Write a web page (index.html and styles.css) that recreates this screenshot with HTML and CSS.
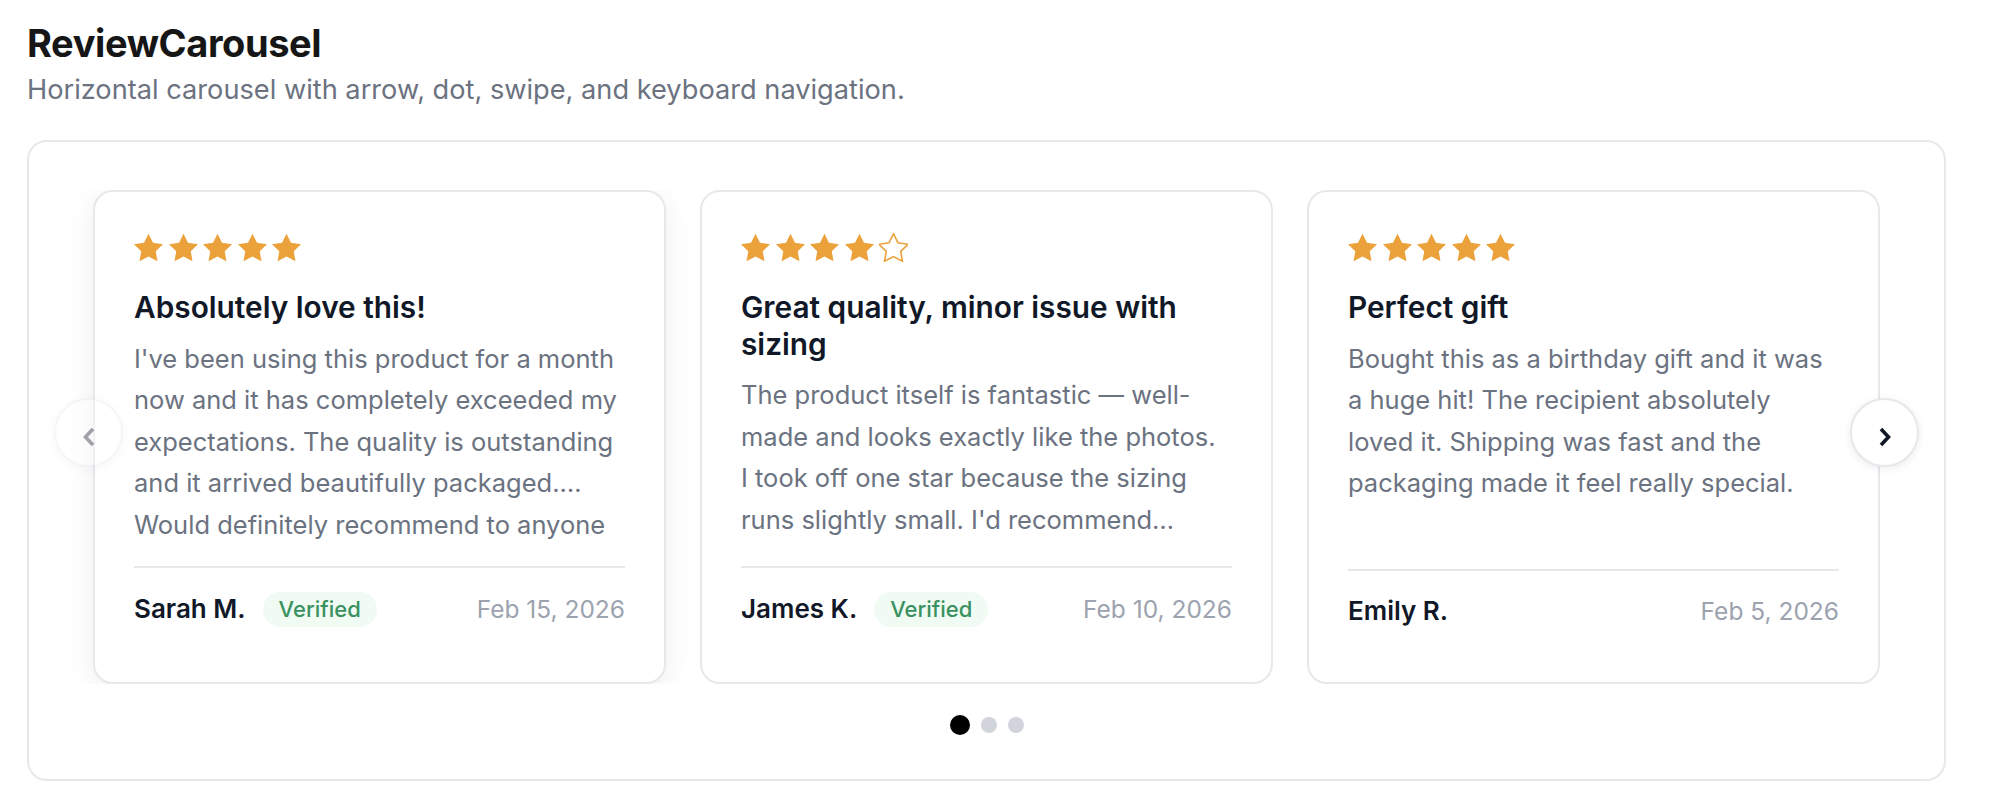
FILE: index.html
```html
<!DOCTYPE html>
<html lang="en">
<head>
<meta charset="utf-8">
<title>ReviewCarousel</title>
<link rel="stylesheet" href="styles.css">
</head>
<body>
<div class="page">
  <h1 class="title">ReviewCarousel</h1>
  <p class="subtitle">Horizontal carousel with arrow, dot, swipe, and keyboard navigation.</p>

  <section class="carousel">
    <div class="stage">
      <button class="nav nav-prev" disabled aria-label="Previous review">
        <svg viewBox="0 0 12 20" width="12" height="20"><polyline points="10,2 2.5,10 10,18" /></svg>
      </button>

      <div class="viewport">
        <div class="track">
          <article class="card card-active">
            <div class="stars">
              <svg class="star" viewBox="2 1.5 20 20"><polygon points="12 2 15.09 8.26 22 9.27 17 14.14 18.18 21.02 12 17.77 5.82 21.02 7 14.14 2 9.27 8.91 8.26"/></svg>
              <svg class="star" viewBox="2 1.5 20 20"><polygon points="12 2 15.09 8.26 22 9.27 17 14.14 18.18 21.02 12 17.77 5.82 21.02 7 14.14 2 9.27 8.91 8.26"/></svg>
              <svg class="star" viewBox="2 1.5 20 20"><polygon points="12 2 15.09 8.26 22 9.27 17 14.14 18.18 21.02 12 17.77 5.82 21.02 7 14.14 2 9.27 8.91 8.26"/></svg>
              <svg class="star" viewBox="2 1.5 20 20"><polygon points="12 2 15.09 8.26 22 9.27 17 14.14 18.18 21.02 12 17.77 5.82 21.02 7 14.14 2 9.27 8.91 8.26"/></svg>
              <svg class="star" viewBox="2 1.5 20 20"><polygon points="12 2 15.09 8.26 22 9.27 17 14.14 18.18 21.02 12 17.77 5.82 21.02 7 14.14 2 9.27 8.91 8.26"/></svg>
            </div>
            <h2 class="card-title">Absolutely love this!</h2>
            <p class="card-body">I've been using this product for a month<br>now and it has completely exceeded my<br>expectations. The quality is outstanding<br>and it arrived beautifully packaged.…<br>Would definitely recommend to anyone</p>
            <footer class="card-footer">
              <span class="author">Sarah M.</span>
              <span class="badge">Verified</span>
              <time class="date">Feb 15, 2026</time>
            </footer>
          </article>

          <article class="card">
            <div class="stars">
              <svg class="star" viewBox="2 1.5 20 20"><polygon points="12 2 15.09 8.26 22 9.27 17 14.14 18.18 21.02 12 17.77 5.82 21.02 7 14.14 2 9.27 8.91 8.26"/></svg>
              <svg class="star" viewBox="2 1.5 20 20"><polygon points="12 2 15.09 8.26 22 9.27 17 14.14 18.18 21.02 12 17.77 5.82 21.02 7 14.14 2 9.27 8.91 8.26"/></svg>
              <svg class="star" viewBox="2 1.5 20 20"><polygon points="12 2 15.09 8.26 22 9.27 17 14.14 18.18 21.02 12 17.77 5.82 21.02 7 14.14 2 9.27 8.91 8.26"/></svg>
              <svg class="star" viewBox="2 1.5 20 20"><polygon points="12 2 15.09 8.26 22 9.27 17 14.14 18.18 21.02 12 17.77 5.82 21.02 7 14.14 2 9.27 8.91 8.26"/></svg>
              <svg class="star star-empty" viewBox="2 1.5 20 20"><polygon points="12 2 15.09 8.26 22 9.27 17 14.14 18.18 21.02 12 17.77 5.82 21.02 7 14.14 2 9.27 8.91 8.26"/></svg>
            </div>
            <h2 class="card-title">Great quality, minor issue with<br>sizing</h2>
            <p class="card-body">The product itself is fantastic — well-<br>made and looks exactly like the photos.<br>I took off one star because the sizing<br>runs slightly small. I'd recommend…</p>
            <footer class="card-footer">
              <span class="author">James K.</span>
              <span class="badge">Verified</span>
              <time class="date">Feb 10, 2026</time>
            </footer>
          </article>

          <article class="card">
            <div class="stars">
              <svg class="star" viewBox="2 1.5 20 20"><polygon points="12 2 15.09 8.26 22 9.27 17 14.14 18.18 21.02 12 17.77 5.82 21.02 7 14.14 2 9.27 8.91 8.26"/></svg>
              <svg class="star" viewBox="2 1.5 20 20"><polygon points="12 2 15.09 8.26 22 9.27 17 14.14 18.18 21.02 12 17.77 5.82 21.02 7 14.14 2 9.27 8.91 8.26"/></svg>
              <svg class="star" viewBox="2 1.5 20 20"><polygon points="12 2 15.09 8.26 22 9.27 17 14.14 18.18 21.02 12 17.77 5.82 21.02 7 14.14 2 9.27 8.91 8.26"/></svg>
              <svg class="star" viewBox="2 1.5 20 20"><polygon points="12 2 15.09 8.26 22 9.27 17 14.14 18.18 21.02 12 17.77 5.82 21.02 7 14.14 2 9.27 8.91 8.26"/></svg>
              <svg class="star" viewBox="2 1.5 20 20"><polygon points="12 2 15.09 8.26 22 9.27 17 14.14 18.18 21.02 12 17.77 5.82 21.02 7 14.14 2 9.27 8.91 8.26"/></svg>
            </div>
            <h2 class="card-title">Perfect gift</h2>
            <p class="card-body">Bought this as a birthday gift and it was<br>a huge hit! The recipient absolutely<br>loved it. Shipping was fast and the<br>packaging made it feel really special.</p>
            <footer class="card-footer">
              <span class="author">Emily R.</span>
              <time class="date">Feb 5, 2026</time>
            </footer>
          </article>
        </div>
      </div>

      <button class="nav nav-next" aria-label="Next review">
        <svg viewBox="0 0 12 20" width="12" height="20"><polyline points="2,2 9.5,10 2,18" /></svg>
      </button>
    </div>

    <div class="dots" role="tablist">
      <span class="dot dot-active"></span>
      <span class="dot"></span>
      <span class="dot"></span>
    </div>
  </section>
</div>
</body>
</html>
```

FILE: styles.css
```css
* {
  box-sizing: border-box;
}

html,
body {
  margin: 0;
  background: #ffffff;
}

body {
  font-family: "Inter", "Noto Sans", "Liberation Sans", sans-serif;
  color: #111827;
}

.page {
  max-width: 1973px;
  padding: 19px 27px 0 27px;
}

.title {
  margin: 0;
  font-size: 38px;
  line-height: 48px;
  font-weight: 700;
  color: #161616;
  letter-spacing: -0.4px;
}

.subtitle {
  margin: 3px 0 0;
  font-size: 27.2px;
  line-height: 40px;
  color: #6b7280;
}

.carousel {
  margin-top: 30px;
  width: 1919px;
  border: 2px solid #e7e8eb;
  border-radius: 20px;
  padding: 48px 0 44px;
}

.stage {
  position: relative;
}

.viewport {
  overflow: hidden;
  padding: 0 64px;
}

.track {
  display: grid;
  grid-template-columns: repeat(3, 1fr);
  gap: 34px;
}

.card {
  display: flex;
  flex-direction: column;
  background: #ffffff;
  border: 2px solid #e7e8eb;
  border-radius: 20px;
  padding: 39px;
}

.card-active {
  box-shadow: 0 6px 28px rgba(17, 24, 39, 0.07);
}

.stars {
  display: flex;
  gap: 5.5px;
  height: 29px;
  margin-top: 2px;
}

.star {
  width: 29px;
  height: 29px;
  fill: #eba23b;
}

.star-empty {
  fill: none;
  stroke: #eba23b;
  stroke-width: 1.1;
  stroke-linejoin: miter;
}

.card-title {
  margin: 27px 0 0;
  font-size: 29.8px;
  line-height: 36.6px;
  font-weight: 600;
  color: #111827;
}

.card-body {
  margin: 12px 0 20px;
  font-size: 25.5px;
  line-height: 41.6px;
  color: #6b7280;
  white-space: nowrap;
}

.card-footer {
  margin-top: auto;
  display: flex;
  align-items: center;
  border-top: 2px solid #e7e8eb;
  padding: 24px 0 16px;
}

.author {
  font-size: 26px;
  line-height: 32px;
  font-weight: 600;
  color: #111827;
}

.badge {
  margin-left: 17px;
  height: 35px;
  padding: 0 16px;
  border-radius: 999px;
  background: #effbf3;
  color: #3a9160;
  font-size: 22px;
  line-height: 35px;
  font-weight: 500;
}

.date {
  margin-left: auto;
  font-size: 24.5px;
  line-height: 32px;
  color: #9ca3af;
}

.nav {
  position: absolute;
  top: 208px;
  width: 69px;
  height: 69px;
  padding: 0;
  border-radius: 50%;
  border: 2px solid #e7e8eb;
  background: #ffffff;
  display: flex;
  align-items: center;
  justify-content: center;
  box-shadow: 0 2px 8px rgba(17, 24, 39, 0.08);
  cursor: pointer;
}

.nav svg {
  width: 12px;
  height: 20px;
  margin-top: 8px;
  fill: none;
  stroke: #111827;
  stroke-width: 3.6;
  stroke-linecap: butt;
  stroke-linejoin: miter;
}

.nav-prev {
  left: 25px;
  opacity: 0.38;
  cursor: default;
}

.nav-next {
  right: 25px;
}

.dots {
  display: flex;
  justify-content: center;
  align-items: center;
  gap: 11px;
  margin-top: 31px;
  height: 20px;
}

.dot {
  width: 16px;
  height: 16px;
  border-radius: 50%;
  background: #d1d5db;
}

.dot-active {
  width: 20px;
  height: 20px;
  background: #000000;
}
```
